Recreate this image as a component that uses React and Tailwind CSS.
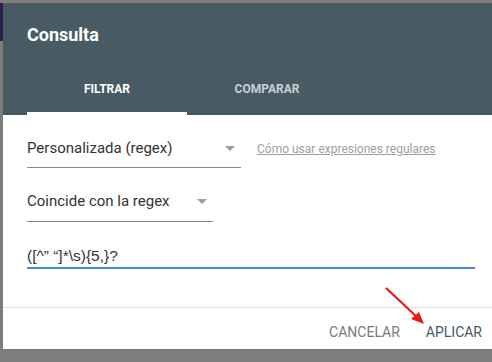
import React from "react";

function Caret({ className }) {
  return (
    <svg width="10" height="5" viewBox="0 0 10 5" className={className}>
      <path d="M0 0h10L5 5z" fill="#9e9e9e" />
    </svg>
  );
}

export default function App() {
  return (
    <div
      className="relative w-[492px] h-[362px] overflow-hidden bg-[#7d7d7d] pt-[3px] pl-[3px]"
      style={{ fontFamily: "Roboto, 'Liberation Sans', sans-serif" }}
    >
      <div className="absolute left-0 top-[3px] w-[3px] h-[38px] bg-[#2e1b4f]" />
      <div className="h-[346px] bg-white flex flex-col">
        {/* header */}
        <div className="bg-[#485a64] h-[112px] px-6 flex flex-col">
          <h1 className="text-white text-[18px] font-bold leading-none mt-[23px]">
            Consulta
          </h1>
          <div className="flex mt-auto">
            <div className="w-[160px] flex flex-col items-center">
              <span className="text-white text-[12px] font-bold leading-none mb-[17px]">
                FILTRAR
              </span>
              <div className="w-full h-[3px] bg-white" />
            </div>
            <div className="w-[160px] flex flex-col items-center">
              <span className="text-[#c9d0d4] text-[12px] font-bold leading-none mb-[20px]">
                COMPARAR
              </span>
            </div>
          </div>
        </div>

        {/* body */}
        <div className="px-6 pt-[24px] flex flex-col">
          <div className="flex items-start">
            <div className="w-[214px] h-[29px] border-b border-[#8a8a8a] flex items-start justify-between pr-[6px]">
              <span className="text-[15px] leading-[18px] text-[#333]">Personalizada (regex)</span>
              <Caret className="mt-[7px]" />
            </div>
            <a className="ml-4 mt-[4px] text-[12px] text-[#9e9e9e] underline leading-none">
              Cómo usar expresiones regulares
            </a>
          </div>
          <div className="mt-[24px] w-[186px] h-[30px] border-b border-[#8a8a8a] flex items-start justify-between pr-[6px]">
            <span className="text-[15px] leading-[18px] text-[#333]">Coincide con la regex</span>
            <Caret className="mt-[7px]" />
          </div>
          <div className="mt-[25px] w-[448px] h-[22px] border-b-2 border-[#4a86e0] flex items-start">
            <span className="text-[15.5px] leading-[18px] text-[#333] font-['Liberation_Sans',sans-serif]">
              ([^” “]*\s){"{5,}?"}
            </span>
          </div>
        </div>

        <div className="mt-auto border-t border-[#e0e0e0] h-[42px] flex items-start justify-end pt-[17px] pr-[10px] gap-[26px]">
          <span className="text-[14px] leading-none text-[#7a7a7a]">CANCELAR</span>
          <span className="text-[14px] leading-none text-[#455a64]">APLICAR</span>
        </div>
      </div>

      <svg className="absolute left-0 top-0" width="492" height="362" viewBox="0 0 492 362">
        <line x1="386" y1="288" x2="418" y2="318" stroke="#e8191a" strokeWidth="2.2" />
        <path d="M424 324L411 319L419 312Z" fill="#e8191a" />
      </svg>
    </div>
  );
}
